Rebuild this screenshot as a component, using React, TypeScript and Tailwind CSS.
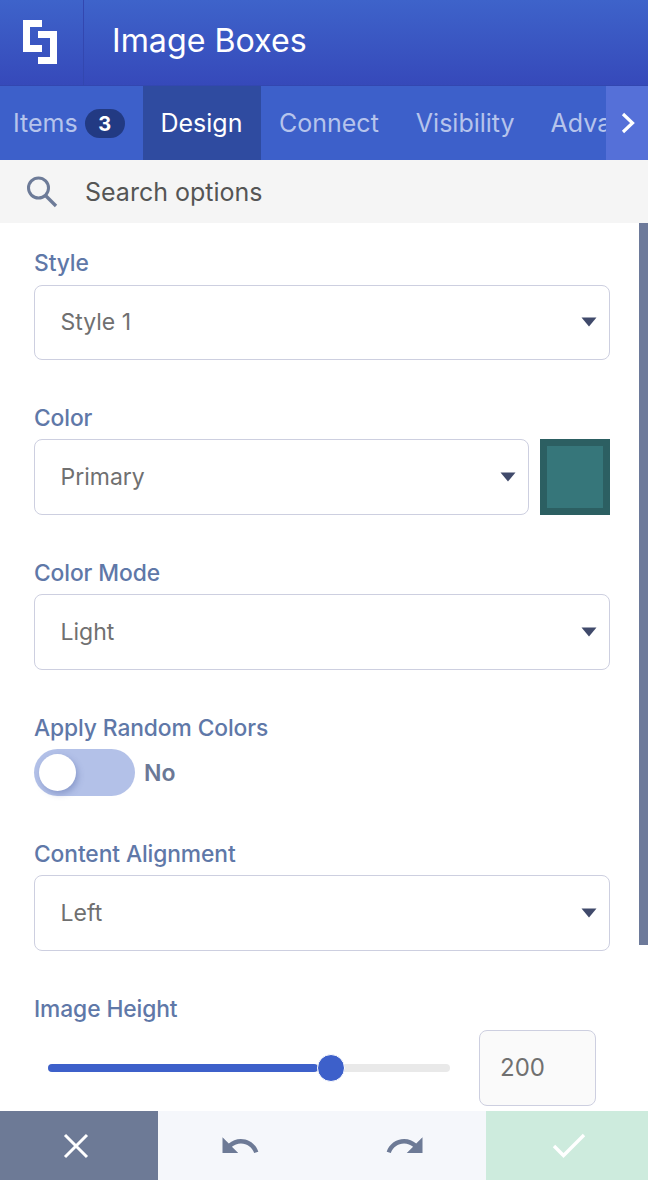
import React from "react";

const font = { fontFamily: "Inter, sans-serif" };

function Field({ label, labelClass, children, className }: { label: string; labelClass: string; children: React.ReactNode; className?: string }) {
  return (
    <div className={className}>
      <div className={"h-[33px] text-[22.8px] leading-[22px] font-medium text-[#5f78a8] tracking-[-0.1px] " + labelClass}>{label}</div>
      {children}
    </div>
  );
}

function Select({ value, className }: { value: string; className?: string }) {
  return (
    <div className={"h-[75.67px] bg-white border border-[#cdcfe0] rounded-[8px] flex items-center justify-between pl-[25.5px] pr-[12.5px] " + (className ?? "")}>
      <span className="text-[23px] text-[#707070]">{value}</span>
      <svg width="16" height="10" viewBox="0 0 16 10"><path d="M0.5 0.5 H15.5 L8 9.5 Z" fill="#404a6b" /></svg>
    </div>
  );
}

export default function App() {
  return (
    <div style={font} className="relative w-[648px] h-[1180px] overflow-hidden bg-white flex flex-col">
      <header className="h-[86px] shrink-0 flex border-b border-[#3347b0] bg-gradient-to-b from-[#3e63ca] to-[#3649ba]">
        <div className="w-[84px] shrink-0 border-r border-[#3347b0] flex items-center justify-center">
          <svg width="40" height="46" viewBox="0 0 40 46" className="mt-[-1px] ml-[-1px]">
            <path fill="#fff" d="M2 1H21V8H9V26H21V33H2Z" />
            <path fill="#fff" d="M17 12H36V45H17V38H29V19H17Z" />
          </svg>
        </div>
        <div className="pl-[28px] pb-[2px] flex items-center text-[32.2px] text-white">Image Boxes</div>
      </header>

      <nav className="relative h-[74px] shrink-0 bg-[#3d60ca] flex overflow-hidden text-[25px] text-[#b6c4ec]">
        <div className="w-[143px] shrink-0 pl-[13px] pt-[1px] flex items-center gap-[7px]">
          <span>Items</span>
          <span className="w-[40px] h-[29px] rounded-full bg-[#223a83] text-white text-[20px] font-bold flex items-center justify-center">3</span>
        </div>
        <div className="w-[118px] shrink-0 bg-[#2f4ba0] text-white pt-[1px] pr-[1px] flex items-center justify-center">Design</div>
        <div className="pl-[18px] pt-[1px] flex items-center">Connect</div>
        <div className="pl-[37px] pt-[1px] flex items-center">Visibility</div>
        <div className="pl-[36px] pt-[1px] flex items-center">Advanced</div>
        <div className="absolute right-0 top-0 bottom-0 w-[42px] bg-[#5570d8] flex items-center justify-center">
          <svg width="16" height="24" viewBox="0 0 16 24" fill="none" className="ml-[2px]"><path d="M3 3L12.5 12L3 21" stroke="#fff" strokeWidth="3.2" /></svg>
        </div>
      </nav>

      <div className="h-[63px] shrink-0 bg-[#f5f5f5] flex items-center pl-[25px] gap-[26px]">
        <svg width="34" height="34" viewBox="0 0 34 34" fill="none">
          <circle cx="13.5" cy="13" r="10" stroke="#6d7b98" strokeWidth="3" />
          <path d="M20.5 20.5L31 31" stroke="#6d7b98" strokeWidth="3.4" />
        </svg>
        <span className="text-[25px] text-[#555] pt-[2px]">Search options</span>
      </div>

      <main className="flex-1 min-h-0 pl-[34px] pr-[38px] pt-[28.67px] overflow-hidden">
        <Field label="Style" labelClass="pt-[0.33px]"><Select value="Style 1" /></Field>
        <Field label="Color" labelClass="pt-[0.67px]" className="mt-[46px]">
          <div className="flex gap-[11px]">
            <Select value="Primary" className="flex-1" />
            <div className="w-[70px] h-[75.67px] shrink-0 bg-[#36767a] border-[7px] border-[#2c5f62]" />
          </div>
        </Field>
        <Field label="Color Mode" labelClass="pt-[1px]" className="mt-[46px]"><Select value="Light" /></Field>
        <Field label="Apply Random Colors" labelClass="pt-[1.33px]" className="mt-[46px]">
          <div className="flex items-center gap-[9px] h-[47.33px]">
            <div className="w-[101px] h-[47px] rounded-full bg-[#b3c1e8] flex items-center pl-[5px]">
              <div className="w-[37px] h-[37px] rounded-full bg-white shadow-[2px_3px_6px_rgba(60,80,150,0.35)]" />
            </div>
            <span className="text-[23px] font-semibold text-[#6b7896] pt-[2px]">No</span>
          </div>
        </Field>
        <Field label="Content Alignment" labelClass="pt-[1px]" className="mt-[46px]"><Select value="Left" /></Field>
        <Field label="Image Height" labelClass="pt-[1.33px]" className="mt-[46px]">
          <div className="flex items-center">
            <div className="relative w-[402px] h-[8px] ml-[14px] rounded-full bg-[#e9e9e9]">
              <div className="absolute left-0 top-0 h-full w-[270px] rounded-full bg-[#3d60ca]" />
              <div className="absolute left-[269px] top-[-10px] w-[28px] h-[28px] rounded-full bg-[#3d60ca] border-[1px] border-white" />
            </div>
            <div className="ml-[29px] w-[117px] h-[76px] bg-[#fafafa] border border-[#cdcfe0] rounded-[8px] flex items-center pl-[20px] text-[24px] text-[#707070]">200</div>
          </div>
        </Field>
      </main>

      <footer className="h-[69px] shrink-0 flex">
        <div className="w-[158px] bg-[#6d7a96] pr-[6px] flex items-center justify-center">
          <svg width="28" height="28" viewBox="0 0 28 28" fill="none"><path d="M3 3L25 25M25 3L3 25" stroke="#fff" strokeWidth="3" /></svg>
        </div>
        <div className="w-[164px] bg-[#f5f7fb] flex items-center justify-center">
          <svg width="42" height="42" viewBox="0 0 24 24" fill="#6d7a96"><path d="M12.5 8c-2.65 0-5.05.99-6.9 2.6L2 7v9h9l-3.62-3.62c1.39-1.16 3.16-1.88 5.12-1.88 3.54 0 6.55 2.31 7.6 5.5l2.37-.78C21.08 11.03 17.15 8 12.5 8z" /></svg>
        </div>
        <div className="w-[164px] bg-[#f5f7fb] pl-[1px] flex items-center justify-center">
          <svg width="42" height="42" viewBox="0 0 24 24" fill="#6d7a96"><path d="M18.4 10.6C16.55 8.99 14.15 8 11.5 8c-4.65 0-8.58 3.03-9.96 7.22L3.9 16c1.05-3.19 4.05-5.5 7.6-5.5 1.95 0 3.73.72 5.12 1.88L13 16h9V7l-3.6 3.6z" /></svg>
        </div>
        <div className="flex-1 bg-[#cdebdd] pl-[3px] flex items-center justify-center">
          <svg width="34" height="26" viewBox="0 0 34 26" fill="none"><path d="M2 13L11.5 22.5L32 2" stroke="#fff" strokeWidth="3.4" /></svg>
        </div>
      </footer>

      <div className="absolute right-0 top-[223px] w-[9px] h-[722px] bg-[#6d7a9a]" />
    </div>
  );
}
